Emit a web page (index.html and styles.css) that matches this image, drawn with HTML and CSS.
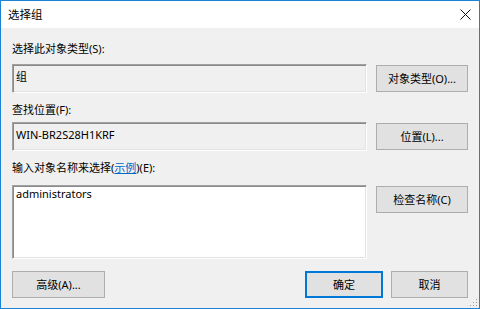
FILE: index.html
```html
<!DOCTYPE html>
<html lang="zh-CN">
<head>
<meta charset="utf-8">
<title>选择组</title>
<link rel="stylesheet" href="styles.css">
</head>
<body>
<div class="window">
  <div class="titlebar">
    <span class="title">选择组</span>
    <span class="close">
      <svg width="11" height="11" viewBox="0 0 11 11"><path d="M0.5 0.5L10.5 10.5M10.5 0.5L0.5 10.5" stroke="#111" stroke-width="1" fill="none"/></svg>
    </span>
  </div>
  <div class="content">
    <div class="label label-1">选择此对象类型(S):</div>
    <div class="row row-1">
      <div class="field readonly">组</div>
      <button class="btn">对象类型(O)...</button>
    </div>
    <div class="label label-2">查找位置(F):</div>
    <div class="row row-2">
      <div class="field readonly latin">WIN-BR2S28H1KRF</div>
      <button class="btn">位置(L)...</button>
    </div>
    <div class="label label-3">输入对象名称来选择(<span class="link">示例</span>)(E):</div>
    <div class="row row-3">
      <div class="field textarea latin">administrators</div>
      <button class="btn btn-top">检查名称(C)</button>
    </div>
    <div class="footer">
      <button class="btn btn-adv">高级(A)...</button>
      <div class="footer-right">
        <button class="btn btn-ok">确定</button>
        <button class="btn btn-cancel">取消</button>
      </div>
    </div>
  </div>
  <svg class="grip" width="8" height="8" viewBox="0 0 8 8">
    <rect x="6" y="0" width="1" height="1" fill="#9a9a9a"/>
    <rect x="3" y="3" width="1" height="1" fill="#9a9a9a"/>
    <rect x="6" y="3" width="1" height="1" fill="#9a9a9a"/>
    <rect x="0" y="6" width="1" height="1" fill="#9a9a9a"/>
    <rect x="3" y="6" width="1" height="1" fill="#9a9a9a"/>
    <rect x="6" y="6" width="1" height="1" fill="#9a9a9a"/>
  </svg>
</div>
</body>
</html>
```

FILE: styles.css
```css
* { box-sizing: border-box; }
html, body { margin: 0; padding: 0; background: #f0f0f0; }
body {
  font-family: "Noto Sans", "Noto Sans CJK SC", sans-serif;
  font-size: 11px;
  color: #000;
}
.window {
  position: relative;
  width: 480px;
  height: 309px;
  border: 1px solid #1b82d6;
  background: #f0f0f0;
  display: flex;
  flex-direction: column;
}
.titlebar {
  height: 27px;
  background: #fff;
  display: flex;
  align-items: center;
  justify-content: space-between;
  padding: 0 8px 0 7px;
}
.title { font-size: 11.5px; line-height: 16px; }
.close { display: flex; width: 11px; height: 11px; }
.content {
  padding: 0 11px;
  display: flex;
  flex-direction: column;
}
.label { line-height: 16px; height: 16px; }
.label-1 { margin-top: 13px; }
.label-2 { margin-top: 9px; }
.label-3 { margin-top: 9px; }
.row-1 { margin-top: 7px; }
.row-2 { margin-top: 4px; }
.row-3 { margin-top: 9px; }
.row {
  display: grid;
  grid-template-columns: 355px 92px;
  justify-content: space-between;
  align-items: center;
}
.field {
  height: 29px;
  padding: 4px 3px 0;
  line-height: 16px;
  border: 1px solid;
  border-color: #a0a0a0 #fff #fff #a0a0a0;
  box-shadow: inset 1px 1px 0 #8a8a8a, inset -1px -1px 0 #e3e3e3;
}
.readonly { background: #f0f0f0; }
.textarea {
  background: #fff;
  height: 74px;
  padding-top: 0;
  align-self: start;
}
.link { color: #0066cc; text-decoration: underline; }
.btn {
  font: inherit;
  color: #000;
  height: 27px;
  padding: 0;
  background: #e1e1e1;
  border: 1px solid #adadad;
  line-height: 16px;
}
.btn-top { align-self: start; margin-top: 1px; }
.footer {
  margin-top: 12px;
  display: flex;
  justify-content: space-between;
  align-items: center;
}
.footer-right { display: flex; gap: 8px; }
.btn-adv { width: 93px; }
.btn-ok { width: 78px; border: 2px solid #0078d7; }
.btn-cancel { width: 77px; }
.grip { position: absolute; right: 1px; bottom: 1px; }
```
